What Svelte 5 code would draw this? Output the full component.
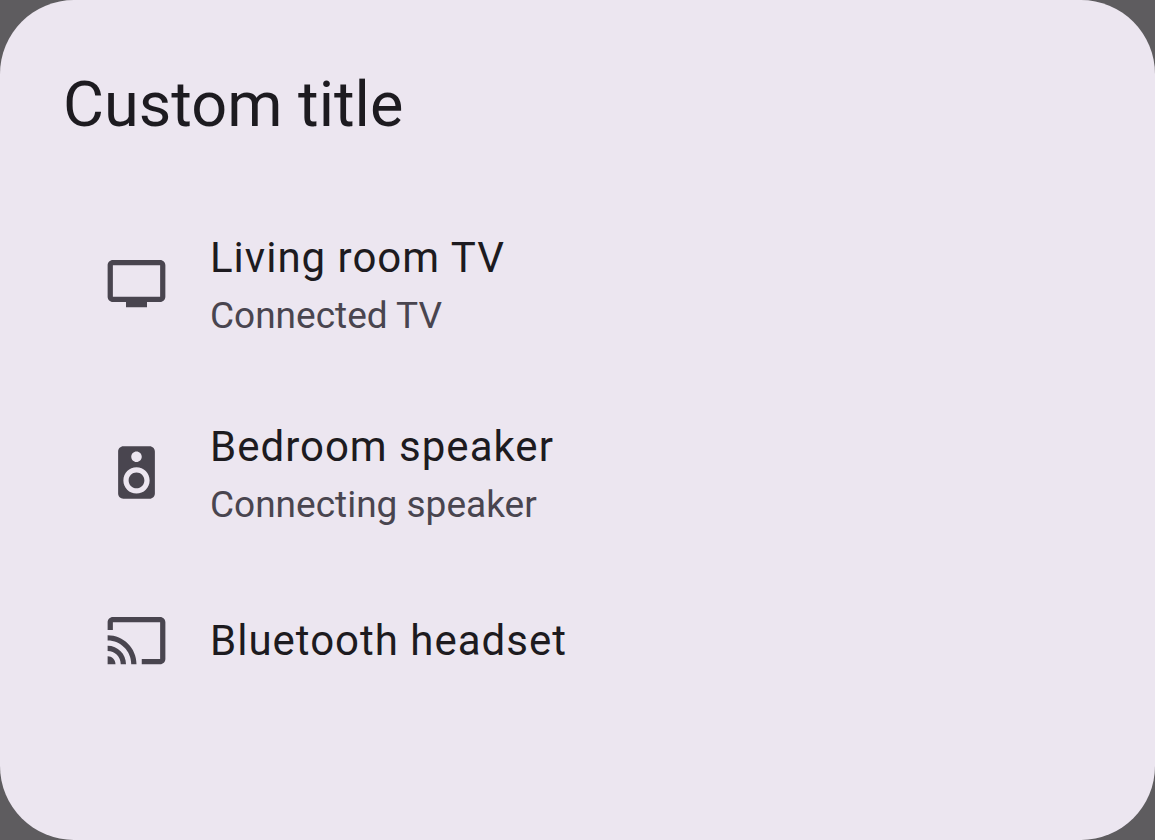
<script>
  const devices = [
    { name: 'Living room TV', status: 'Connected TV', icon: 'tv' },
    { name: 'Bedroom speaker', status: 'Connecting speaker', icon: 'speaker' },
    { name: 'Bluetooth headset', status: '', icon: 'cast' }
  ];

  const paths = {
    tv: 'M21 3H3c-1.1 0-2 .9-2 2v12c0 1.1.9 2 2 2h5v2h8v-2h5c1.1 0 1.99-.9 1.99-2L23 5c0-1.1-.9-2-2-2zm0 14H3V5h18v12z',
    speaker: 'M17 2H7c-1.1 0-2 .9-2 2v16c0 1.1.9 1.99 2 1.99L17 22c1.1 0 2-.9 2-2V4c0-1.1-.9-2-2-2zm-5 2c1.1 0 2 .9 2 2s-.9 2-2 2c-1.11 0-2-.9-2-2s.89-2 2-2zm0 16c-2.76 0-5-2.24-5-5s2.24-5 5-5 5 2.24 5 5-2.24 5-5 5zm0-8c-1.66 0-3 1.34-3 3s1.34 3 3 3 3-1.34 3-3-1.34-3-3-3z',
    cast: 'M21 3H3c-1.1 0-2 .9-2 2v3h2V5h18v14h-7v2h7c1.1 0 2-.9 2-2V5c0-1.1-.9-2-2-2zM1 18v3h3c0-1.66-1.34-3-3-3zm0-4v2c2.76 0 5 2.24 5 5h2c0-3.87-3.13-7-7-7zm0-4v2c4.97 0 9 4.03 9 9h2c0-6.08-4.93-11-11-11z'
  };
</script>

<main class="dialog">
  <h1>Custom title</h1>
  <ul>
    {#each devices as device}
      <li>
        <button class="device" class:single={!device.status}>
          <svg viewBox="0 0 24 24" aria-hidden="true"><path d={paths[device.icon]} /></svg>
          <span class="labels">
            <span class="name">{device.name}</span>
            {#if device.status}<span class="status">{device.status}</span>{/if}
          </span>
        </button>
      </li>
    {/each}
  </ul>
</main>

<style>
  :global(body) {
    margin: 0;
    background: #5e5c5f;
  }
  .dialog {
    box-sizing: border-box;
    min-height: 100vh;
    padding: 63px;
    border-radius: 74px;
    background: #ece6f0;
    color: #1d1b20;
    font-family: Roboto, sans-serif;
  }
  h1 {
    margin: 0;
    font-size: 63px;
    line-height: 84px;
    font-weight: 400;
  }
  ul {
    margin: 42px 0 0;
    padding: 0;
    list-style: none;
  }
  .device {
    display: flex;
    align-items: center;
    gap: 42px;
    width: 100%;
    min-height: 189px;
    padding: 0 42px;
    border: 0;
    background: none;
    color: inherit;
    font: inherit;
    text-align: left;
  }
  .single {
    min-height: 147px;
  }
  svg {
    width: 63px;
    height: 63px;
    flex: none;
    fill: #49454f;
  }
  .labels {
    display: flex;
    flex-direction: column;
  }
  .name {
    font-size: 42px;
    line-height: 63px;
    letter-spacing: 1px;
  }
  .status {
    color: #49454f;
    font-size: 37px;
    line-height: 53px;
  }
</style>
